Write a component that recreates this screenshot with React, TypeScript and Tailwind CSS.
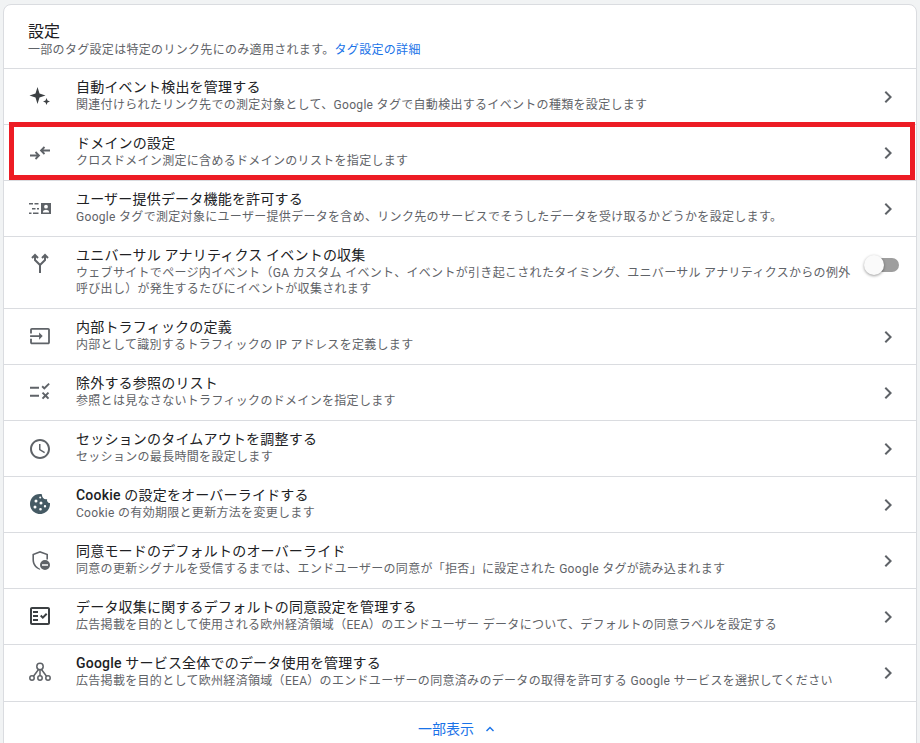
import React from "react";

const F = "#5f6368";
const Svg = ({ children }: { children: React.ReactNode }) => (
  <svg width={24} height={24} viewBox="0 0 24 24" fill={F} className="block">{children}</svg>
);

const icons: Record<string, React.ReactNode> = {
  sparkle: <Svg><path fill="#3c4043" d="M9.500 2l2 6.500 6 2-6 2-2 6.500-2-6.500-6-2 6-2z" /><path fill="#3c4043" d="M18.500 13l1 2.500 2.500 1-2.500 1-1 2.500-1-2.500-2.500-1 2.500-1z" /></Svg>,
  arrows: <Svg><g fill="none" stroke={F} strokeWidth="1.800"><path d="M22 9.500h-9M16.500 6L13 9.500l3.500 3.500" /><path d="M2 14.500h9M7.500 11l3.500 3.500L7.500 18" /></g></Svg>,
  data: <Svg><path d="M1 6h4v1.600H1zM6.500 6h4v1.600h-4zM4 11h3.500v1.600H4zM9 11h2v1.600H9zM1 15.400h2.500V17H1zM5 15.400h5.500V17H5z" /><path fillRule="evenodd" d="M13 6h10v11H13zM18 7.800a1.900 1.900 0 100 3.800 1.900 1.900 0 000-3.800zM15 15.500h6v-.8c0-1.200-2-1.900-3-1.900s-3 .7-3 1.900z" /></Svg>,
  split: <Svg><g fill="none" stroke={F} strokeWidth="2"><path d="M12 20v-8L7 7V2M12 12l5-5V2" /><path d="M4 5l3-3 3 3M14 5l3-3 3 3" /></g></Svg>,
  input: <Svg><g transform="translate(1.200 .300) scale(.9)"><path d="M21 3.010H3c-1.100 0-2 .9-2 2V9h2V4.990h18v14.030H3V15H1v4.010c0 1.100.9 1.980 2 1.980h18c1.100 0 2-.88 2-1.980v-14c0-1.110-.9-2-2-2zM11 16l4-4-4-4v3H1v2h10v3z" /></g></Svg>,
  rule: <Svg><path d="M2 5.700h9v2H2zM2 13.700h9v2H2z" /><path d="M16.300 8.700l-2.800-2.800 1.300-1.300 1.500 1.500 4.200-4.200 1.300 1.300zM21.200 12.300L19.800 10.900 17.500 13.200l-2.300-2.300-1.400 1.400 2.300 2.300-2.300 2.300 1.400 1.400 2.300-2.300 2.300 2.300 1.400-1.400-2.300-2.300z" /></Svg>,
  clock: <Svg><path d="M11.990 2C6.470 2 2 6.480 2 12s4.470 10 9.990 10C17.520 22 22 17.520 22 12S17.520 2 11.990 2zM12 20c-4.420 0-8-3.580-8-8s3.580-8 8-8 8 3.580 8 8-3.580 8-8 8zM12.500 7H11v6l5.250 3.150.75-1.230-4.500-2.670z" /></Svg>,
  cookie: <Svg><path fill="#455a64" fillRule="evenodd" d="M21.950 9.990c-1.790-.03-3.700-1.950-2.680-4.040-2.970 1-5.780-1.590-5.190-4.560C7.110-.26 2 5.410 2 11c0 5.520 4.480 10 10 10 5.890 0 10.540-5.080 9.950-11.010zM8 9.500a1.500 1.500 0 110-3 1.500 1.500 0 010 3zm-1 6a1.500 1.500 0 110-3 1.500 1.500 0 010 3zm5.500 2a1.300 1.300 0 110-2.600 1.300 1.300 0 010 2.600zm.5-6a1.500 1.500 0 110-3 1.500 1.500 0 010 3zm4 3a1.200 1.200 0 110-2.400 1.200 1.200 0 010 2.400zM12.200 5.500a1 1 0 110-2 1 1 0 010 2z" /></Svg>,
  shield: <Svg><path d="M12 2l8 3v5.500h-1.600V6.100L12 3.700 6 6.100v4.700c0 3.700 2.300 7.100 5.500 8.500l.8 1.700C7.500 19.700 4.400 15.600 4.400 10.800V5z" /><path fillRule="evenodd" d="M17 11a5 5 0 100 10 5 5 0 000-10zm-3 4.200h6v1.600h-6z" /></Svg>,
  fact: <Svg><g transform="translate(0 -1)"><path fillRule="evenodd" fill="#3c4043" d="M20 3H4c-1.100 0-2 .9-2 2v14c0 1.100.9 2 2 2h16c1.100 0 2-.9 2-2V5c0-1.100-.9-2-2-2zm0 16H4V5h16v14z" /><path fill="#3c4043" d="M19.410 10.420l-1.420-1.420-3.170 3.170-1.410-1.420L12 12.160 14.820 15zM5 7h5v2H5zM5 11h5v2H5zM5 15h5v2H5z" /></g></Svg>,
  hub: <Svg><g fill="none" stroke={F} strokeWidth="1.500"><circle cx="12" cy="5.500" r="3.200" /><circle cx="4" cy="17" r="2.200" /><circle cx="12" cy="17" r="2.200" /><circle cx="20" cy="17" r="2.200" /><path d="M12 8.700v6.100M10.500 8.500L5.500 15.300M13.500 8.500l5 6.800" /></g></Svg>,
};

const Chevron = () => (
  <svg width="24" height="24" viewBox="0 0 24 24" fill={F} className="mt-[8px] shrink-0"><path d="M10 6L8.590 7.410 13.170 12l-4.580 4.590L10 18l6-6z" /></svg>
);

const Toggle = () => (
  <div className="relative mt-[10px] ml-[10px] mr-[1px] h-[20px] w-[35px] shrink-0">
    <div className="absolute right-0 top-[3px] h-[14px] w-[28px] rounded-full bg-[#9e9e9e]" />
    <div className="absolute left-0 top-0 h-[20px] w-[20px] rounded-full bg-[#fafafa] shadow-[0_1px_3px_rgba(0,0,0,0.4)]" />
  </div>
);

type Row = { icon: string; title: React.ReactNode; sub: React.ReactNode; toggle?: boolean; boxed?: boolean; last?: boolean };

const rows: Row[] = [
  { icon: "sparkle", title: "自動イベント検出を管理する", sub: "関連付けられたリンク先での測定対象として、Google タグで自動検出するイベントの種類を設定します" },
  { icon: "arrows", title: "ドメインの設定", sub: "クロスドメイン測定に含めるドメインのリストを指定します", boxed: true },
  { icon: "data", title: "ユーザー提供データ機能を許可する", sub: "Google タグで測定対象にユーザー提供データを含め、リンク先のサービスでそうしたデータを受け取るかどうかを設定します。" },
  { icon: "split", title: "ユニバーサル アナリティクス イベントの収集", sub: "ウェブサイトでページ内イベント（GA カスタム イベント、イベントが引き起こされたタイミング、ユニバーサル アナリティクスからの例外呼び出し）が発生するたびにイベントが収集されます", toggle: true },
  { icon: "input", title: "内部トラフィックの定義", sub: "内部として識別するトラフィックの IP アドレスを定義します" },
  { icon: "rule", title: "除外する参照のリスト", sub: "参照とは見なさないトラフィックのドメインを指定します" },
  { icon: "clock", title: "セッションのタイムアウトを調整する", sub: "セッションの最長時間を設定します" },
  { icon: "cookie", title: <><span className="font-medium">Cookie</span> の設定をオーバーライドする</>, sub: "Cookie の有効期限と更新方法を変更します" },
  { icon: "shield", title: "同意モードのデフォルトのオーバーライド", sub: "同意の更新シグナルを受信するまでは、エンドユーザーの同意が「拒否」に設定された Google タグが読み込まれます" },
  { icon: "fact", title: "データ収集に関するデフォルトの同意設定を管理する", sub: "広告掲載を目的として使用される欧州経済領域（EEA）のエンドユーザー データについて、デフォルトの同意ラベルを設定する" },
  { icon: "hub", title: <><span className="font-medium">Google</span> サービス全体でのデータ使用を管理する</>, sub: "広告掲載を目的として欧州経済領域（EEA）のエンドユーザーの同意済みのデータの取得を許可する Google サービスを選択してください", last: true },
];

export default function App() {
  return (
    <div className="h-[743px] w-[920px] overflow-hidden bg-[#f1f3f4] px-[3px] pt-[4px] font-['Roboto','Noto_Sans_CJK_JP',sans-serif]">
      <div className="h-[760px] rounded-t-[8px] border border-[#dadce0] bg-white">
        <div className="h-[64px] border-b border-[#dadce0] pl-[24px] pt-[17px]">
          <div className="text-[16px] leading-[20px] text-[#202124]">設定</div>
          <div className="text-[12px] leading-[16px] tracking-[0.31px] text-[#5f6368]">
            一部のタグ設定は特定のリンク先にのみ適用されます。<span className="text-[#1a73e8]">タグ設定の詳細</span>
          </div>
        </div>
        {rows.map((r, i) => (
          <div key={i} className={`relative flex items-start border-b border-[#dadce0] pl-[24px] pr-[16px] pt-[8px] ${r.last ? "pb-[9px]" : "pb-[8px]"}`}>
            {r.boxed && <div className="pointer-events-none absolute bottom-0 left-[5px] right-[1px] top-[-3px] border-[5px] border-[#ed1c24]" />}
            <div className="mr-[24px] mt-[8px] h-[24px] w-[24px] shrink-0">{icons[r.icon]}</div>
            <div className="min-w-0 flex-1 pb-[3px]">
              <div className="text-[14px] leading-[20px] tracking-[0.2px] text-[#202124]">{r.title}</div>
              <div className="text-[12px] leading-[16px] tracking-[0.31px] text-[#5f6368]">{r.sub}</div>
            </div>
            {r.toggle ? <Toggle /> : <Chevron />}
          </div>
        ))}
        <div className="flex items-center justify-center gap-[10px] pr-[6px] pt-[17px] text-[14px] leading-[20px] text-[#1a73e8]">
          <span>一部表示</span>
          <svg width="12" height="12" viewBox="0 0 24 24" fill="#1a73e8"><path d="M12 7l-8 8 2 2 6-6 6 6 2-2z" /></svg>
        </div>
      </div>
    </div>
  );
}
